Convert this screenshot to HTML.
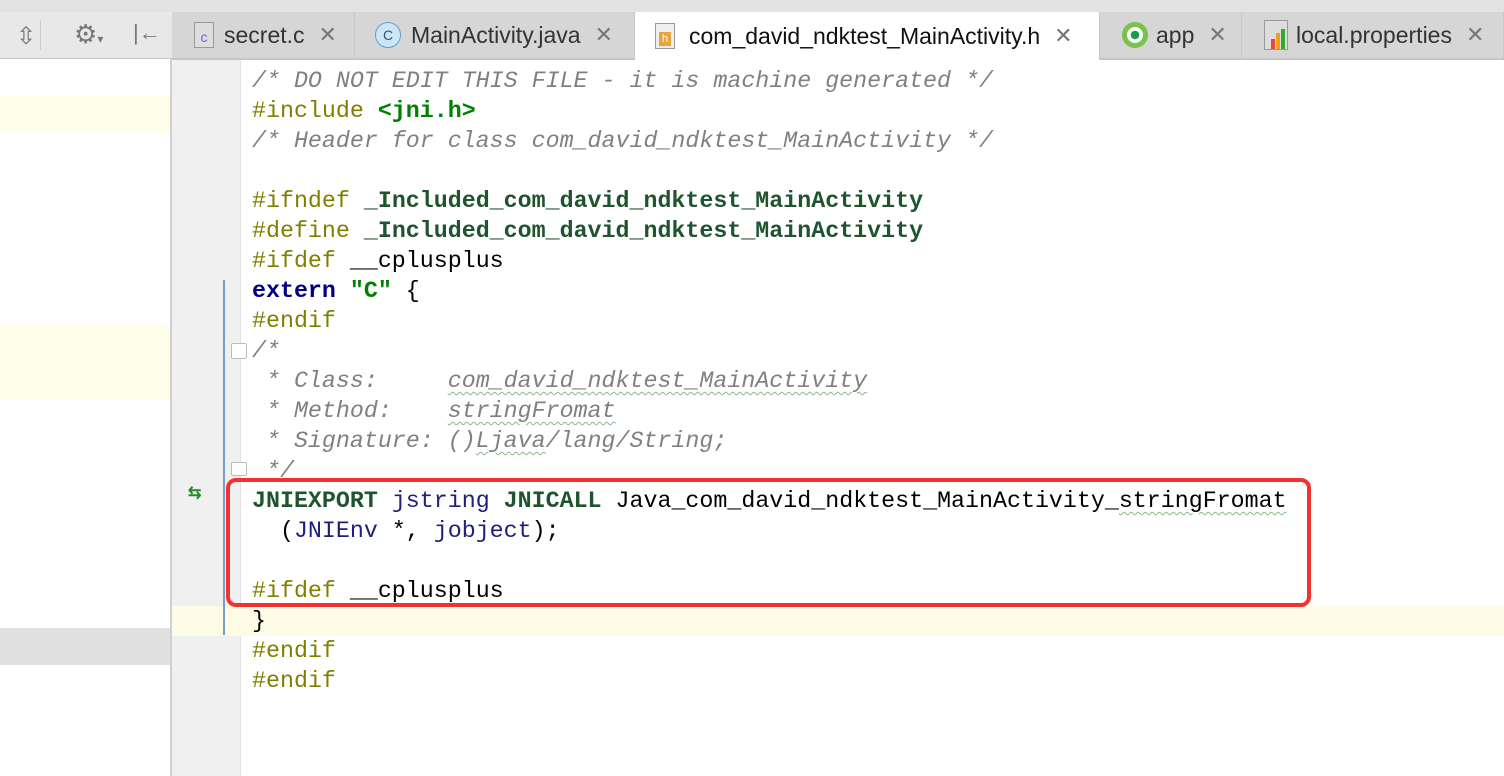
<!DOCTYPE html>
<html><head><style>
body{margin:0;width:1504px;height:776px;overflow:hidden;background:#fff;font-family:"Liberation Sans",sans-serif;position:relative}
.abs{position:absolute}
.code{position:absolute;left:252px;top:66px;font-family:"Liberation Mono",monospace;font-size:23.3px;line-height:30px;white-space:pre;color:#000}
.c{color:#808080;font-style:italic}
.p{color:#808000}
.g{color:#008000;font-weight:bold}
.d{color:#1f542e;font-weight:bold}
.k{color:#000080;font-weight:bold}
.t{color:#20207a}
.w{text-decoration:underline wavy #8ab88a;text-decoration-thickness:1px;text-underline-offset:4px}
.tab{position:absolute;top:12px;height:46px;font-size:23px;color:#333;display:flex;align-items:center;border-right:1px solid #c8c8c8;box-sizing:border-box}
.x{color:#777;margin-left:14px;font-size:22px}
</style></head><body>
<div class="abs" style="left:0;top:0;width:1504px;height:12px;background:#e3e3e3;border-bottom:1px solid #c6c6c6"></div>
<div class="abs" style="left:0;top:12px;width:172px;height:46px;background:#e8e8e8;border-bottom:1px solid #c6c6c6"></div>
<div class="abs" style="left:16px;top:22px;font-size:24px;color:#777">⇳</div>
<div class="abs" style="left:40px;top:20px;width:1px;height:30px;background:#ccc"></div>
<div class="abs" style="left:74px;top:19px;font-size:26px;color:#777">⚙<span style="font-size:12px">▾</span></div>
<div class="abs" style="left:133px;top:20px;font-size:22px;color:#777">|←</div>
<div class="abs" style="left:0;top:96px;width:170px;height:37px;background:#fefee8"></div>
<div class="abs" style="left:0;top:325px;width:170px;height:75px;background:#fefee8"></div>
<div class="abs" style="left:0;top:628px;width:170px;height:37px;background:#e0e0e0"></div>
<div class="abs" style="left:170px;top:58px;width:2px;height:718px;background:#d0d0d0"></div>
<div class="abs" style="left:172px;top:12px;width:1332px;height:46px;background:#d6d6d6;border-bottom:2px solid #c6c6c6"></div>
<div class="tab" style="left:172px;width:183px;padding-left:22px"><span style="display:inline-block;width:18px;height:24px;background:#ddd;border:1px solid #999;margin-right:10px;color:#7a5fc9;font-size:14px;text-align:center;line-height:28px">c</span>secret.c<span class="x">✕</span></div>
<div class="tab" style="left:355px;width:280px;padding-left:20px"><span style="display:inline-block;width:24px;height:24px;border-radius:50%;background:#cde6f6;border:1px solid #5ba0d8;margin-right:10px;font-size:14px;text-align:center;line-height:24px;color:#357">C</span>MainActivity.java<span class="x">✕</span></div>
<div class="tab" style="left:635px;width:465px;padding-left:20px;background:#fff;height:48px;color:#111"><span style="display:inline-block;width:18px;height:24px;background:#eee;border:1px solid #999;margin-right:14px;position:relative"><span style="position:absolute;left:3px;top:8px;width:12px;height:14px;background:#e8a33d;font-size:11px;line-height:14px;text-align:center;color:#fff">h</span></span>com_david_ndktest_MainActivity.h<span class="x">✕</span></div>
<div class="tab" style="left:1100px;width:142px;padding-left:22px"><span style="display:inline-block;width:16px;height:16px;border-radius:50%;border:5px solid #7cc04e;margin-right:8px;background:radial-gradient(#1a9e4a 35%,#fff 40%)"></span>app<span class="x">✕</span></div>
<div class="tab" style="left:1242px;width:262px;padding-left:22px"><span style="display:inline-block;width:22px;height:28px;margin-right:8px;position:relative;background:#ddd;border:1px solid #999"><span style="position:absolute;left:6px;bottom:0;width:4px;height:10px;background:#e44"></span><span style="position:absolute;left:11px;bottom:0;width:4px;height:16px;background:#f0a020"></span><span style="position:absolute;left:16px;bottom:0;width:4px;height:20px;background:#3a3"></span></span>local.properties<span class="x">✕</span></div>
<div class="abs" style="left:172px;top:60px;width:68px;height:716px;background:#f0f0f0"></div>
<div class="abs" style="left:240px;top:60px;width:1px;height:716px;background:#e2e2e2"></div>
<div class="abs" style="left:172px;top:606px;width:1332px;height:30px;background:#fefbe6"></div>
<div class="abs" style="left:223px;top:280px;width:2px;height:355px;background:#7a9cc8"></div>
<div class="abs" style="left:188px;top:489px;color:#2a8a2a;font-size:16px;font-weight:bold;line-height:9px">⇆</div>
<div class="abs" style="left:231px;top:343px;width:14px;height:14px;border:1px solid #bbb;border-radius:2px;background:#fff"></div>
<div class="abs" style="left:231px;top:462px;width:14px;height:12px;border:1px solid #bbb;border-radius:2px;background:#fff"></div>
<div class="code"><span class="c">/* DO NOT EDIT THIS FILE - it is machine generated */</span>
<span class="p">#include</span> <span class="g">&lt;jni.h&gt;</span>
<span class="c">/* Header for class com_david_ndktest_MainActivity */</span>

<span class="p">#ifndef</span> <span class="d">_Included_com_david_ndktest_MainActivity</span>
<span class="p">#define</span> <span class="d">_Included_com_david_ndktest_MainActivity</span>
<span class="p">#ifdef</span> __cplusplus
<span class="k">extern</span> <span class="g">"C"</span> {
<span class="p">#endif</span>
<span class="c">/*</span>
<span class="c"> * Class:     <span class="w">com_david_ndktest_MainActivity</span></span>
<span class="c"> * Method:    <span class="w">stringFromat</span></span>
<span class="c"> * Signature: ()<span class="w">Ljava</span>/lang/String;</span>
<span class="c"> */</span>
<span class="d">JNIEXPORT</span> <span class="t">jstring</span> <span class="d">JNICALL</span> Java_com_david_ndktest_MainActivity_<span class="w">stringFromat</span>
  (<span class="t">JNIEnv</span> *, <span class="t">jobject</span>);

<span class="p">#ifdef</span> __cplusplus
}
<span class="p">#endif</span>
<span class="p">#endif</span></div>
<div class="abs" style="left:226px;top:478px;width:1077px;height:121px;border:4px solid #f2332d;border-radius:10px"></div>
</body></html>
